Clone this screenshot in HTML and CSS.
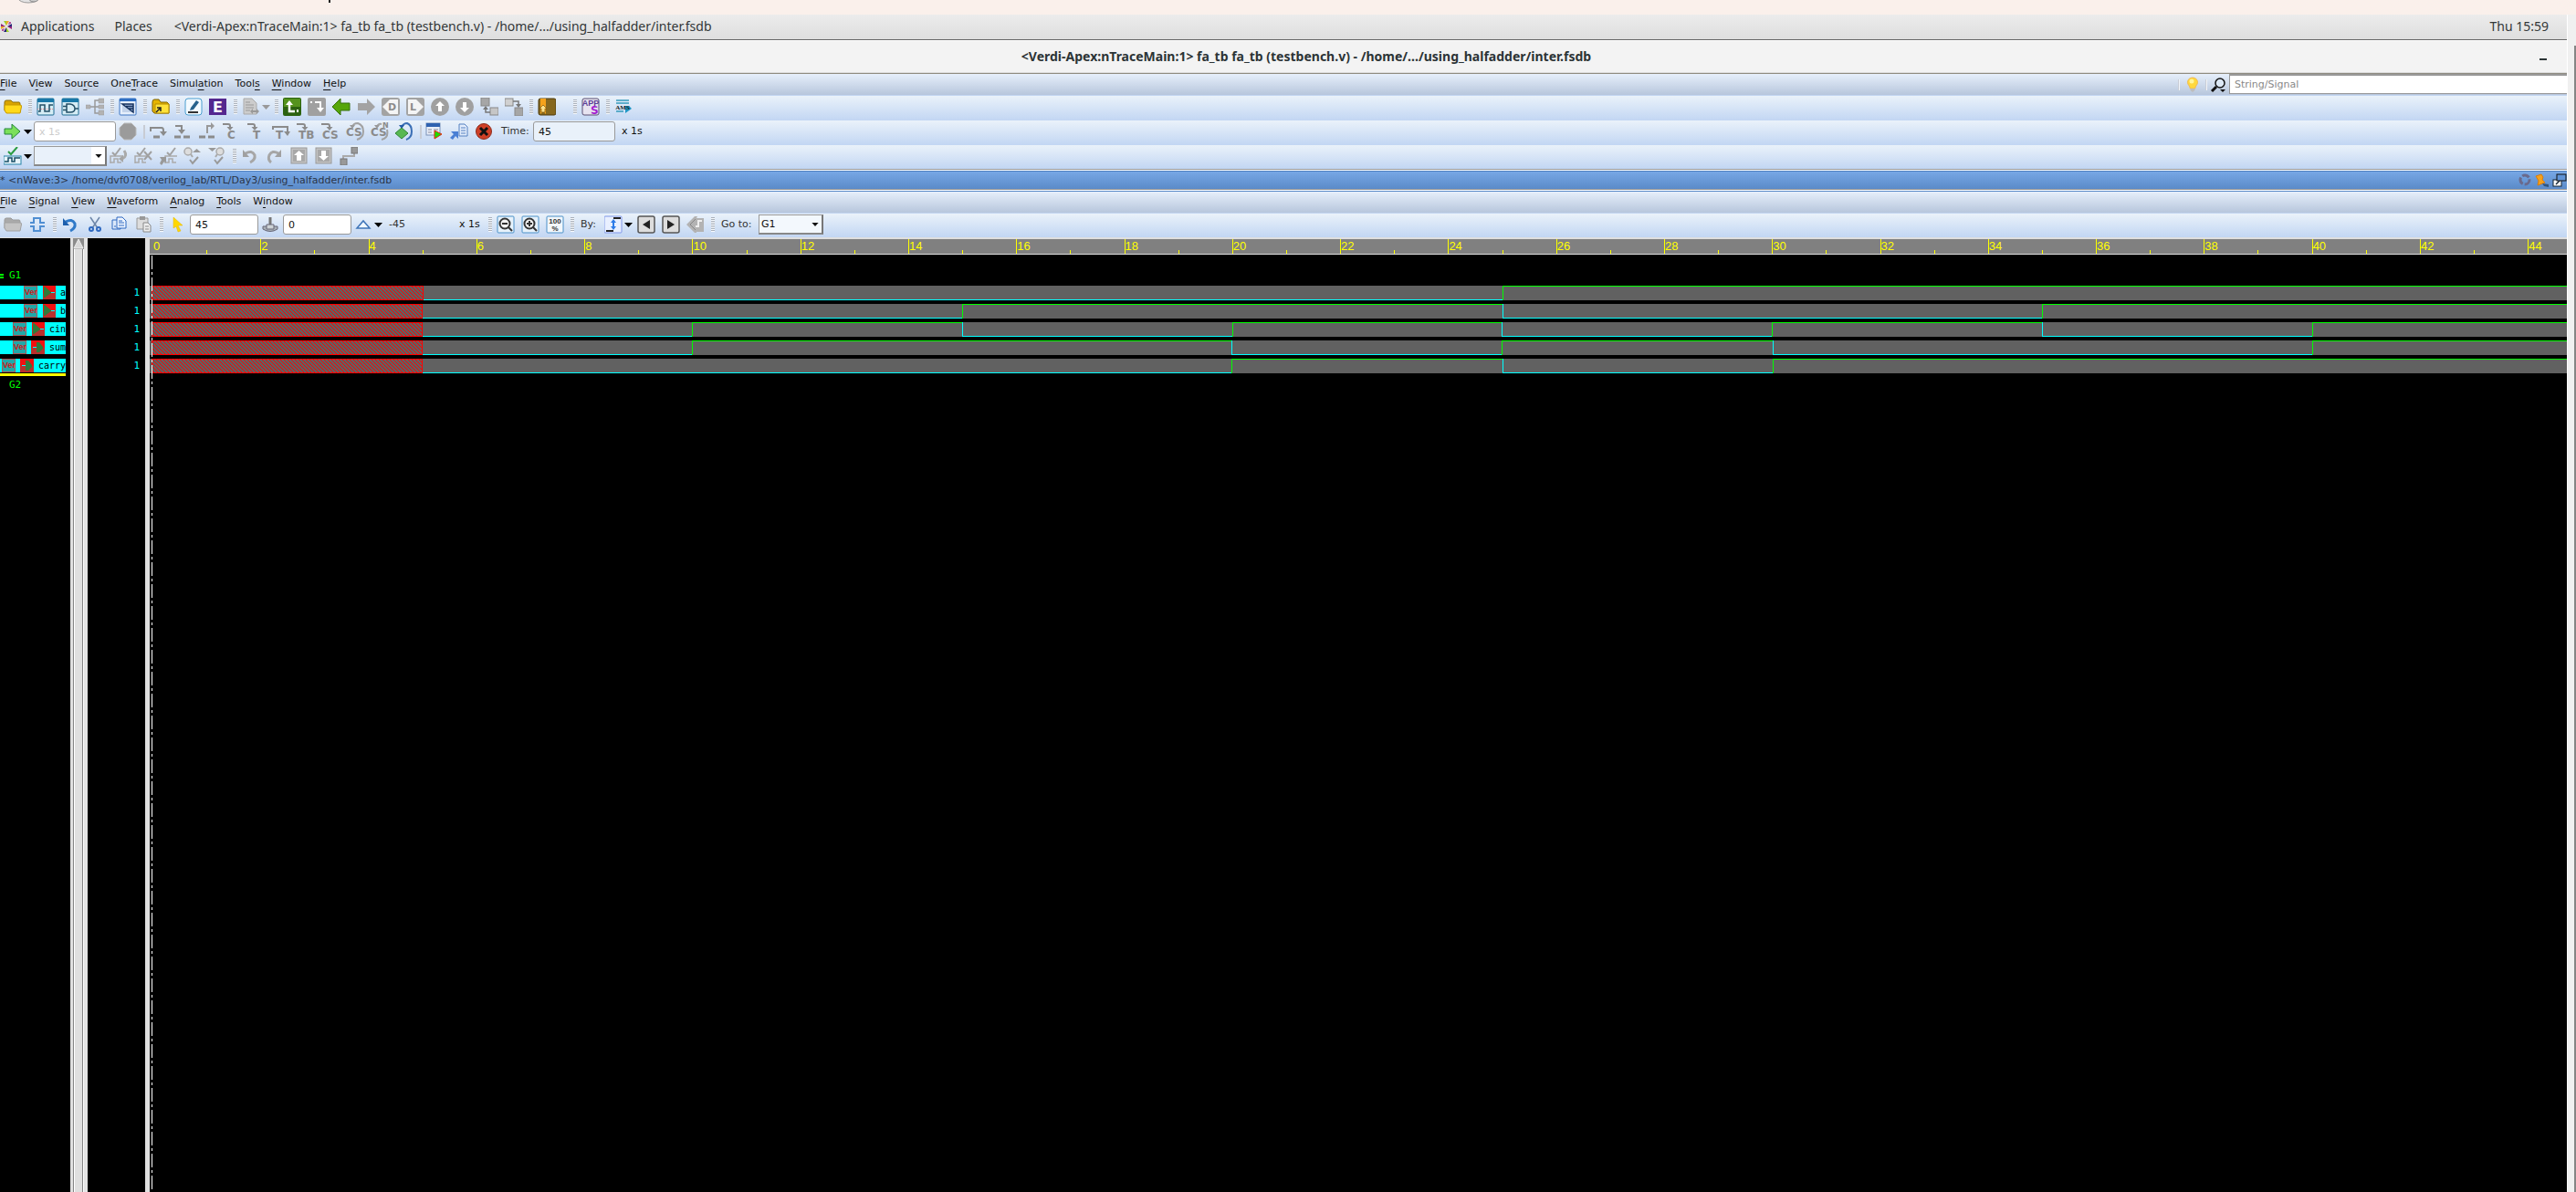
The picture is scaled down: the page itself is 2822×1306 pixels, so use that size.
FILE: index.html
```html
<!DOCTYPE html>
<html lang="en">
<head>
<meta charset="utf-8">
<title>Verdi nWave</title>
<link rel="stylesheet" href="styles.css">
</head>
<body>
<svg class="defs" width="0" height="0" aria-hidden="true">
  <symbol id="caret" viewBox="0 0 9 5"><path d="M0 0H9L4.500 5Z" fill="currentColor"/></symbol>
  <symbol id="step" viewBox="0 0 20 20"><path d="M3 3H10Q12 3 12 5V7" fill="none" stroke="#8b8b8b" stroke-width="2"/><path d="M8.500 6H15.500L12 10Z" fill="#8b8b8b"/></symbol>
  <symbol id="check-wave" viewBox="0 0 20 20"><path d="M1 18V10H15" fill="none" stroke="#aaa" stroke-width="1.500"/><path d="M1 17H5V13H9V17H13" fill="none" stroke="#aaa" stroke-width="1.500"/><path d="M3 6L6 9L12 1" fill="none" stroke="#a2a2a2" stroke-width="2"/></symbol>
  <symbol id="port-in" viewBox="0 0 15 15"><rect x="1" y="0" width="14" height="15" fill="#b8302c"/><rect x="1" y="0" width="14" height="8" fill="#f01010"/><path d="M2 1H3L10 7V8L3 13H2Z" fill="#2f7a3a"/><path d="M10 7.500H14" stroke="#0ff"/></symbol>
  <symbol id="port-out" viewBox="0 0 15 15"><rect x="0" y="0" width="15" height="15" fill="#b8302c"/><rect x="0" y="0" width="15" height="8" fill="#f01010"/><path d="M6 2H9L13 7V9L9 13H6Z" fill="#2f7a3a"/><path d="M2 7.500H6" stroke="#0ff"/></symbol>
</svg>

<div class="remote-edge">
  <svg width="40" height="4" viewBox="0 0 40 4"><ellipse cx="23" cy="-2" rx="11" ry="5" fill="#e3e3e3" stroke="#999"/><ellipse cx="29" cy="-3" rx="6" ry="5" fill="#ccc" stroke="#888"/></svg>
  <i class="tail"></i>
</div>
<div class="screen">
<div class="desktop">
  <header class="panel">
    <svg class="logo" viewBox="0 0 14 14"><path d="M4 1H7V6Z" fill="#9ccd2a"/><path d="M7 1H10L7 6Z" fill="#efa724"/><path d="M13 4V7L8 7Z" fill="#262577"/><path d="M13 7V10L8 7Z" fill="#932279"/><path d="M10 13H7V8Z" fill="#9ccd2a"/><path d="M7 13H4L7 8Z" fill="#262577"/><path d="M1 4V7H6Z" fill="#932279"/><path d="M1 7V10L6 7Z" fill="#efa724"/><path d="M10 2H12V4L9 5ZM2 10L5 9L4 12H2Z" fill="#b2549b"/></svg>
    <span class="panel-apps">Applications</span>
    <span class="panel-places">Places</span>
    <span>&lt;Verdi-Apex:nTraceMain:1&gt; fa_tb fa_tb (testbench.v) - /home/.../using_halfadder/inter.fsdb</span>
    <time>Thu 15:59</time>
  </header>
  <div class="titlebar">
    <h1>&lt;Verdi-Apex:nTraceMain:1&gt; fa_tb fa_tb (testbench.v) - /home/.../using_halfadder/inter.fsdb</h1>
    <button class="minimize" aria-label="Minimize"></button>
  </div>

  <nav class="menubar">
    <button><u>F</u>ile</button><button>V<u>i</u>ew</button><button>Sou<u>r</u>ce</button><button>One<u>T</u>race</button><button>Simul<u>a</u>tion</button><button>Tool<u>s</u></button><button><u>W</u>indow</button><button><u>H</u>elp</button>
    <div class="find">
      <i class="rule"></i>
      <svg width="24" height="18" viewBox="0 0 24 18"><path d="M12 1C8.500 1 6.500 3.500 6.500 6.200C6.500 9 9 10 9.300 13H14.700C15 10 17.500 9 17.500 6.200C17.500 3.500 15.500 1 12 1Z" fill="#ffd83d" stroke="#f0bb55"/><circle cx="11" cy="5" r="2.500" fill="#fff59a"/><path d="M9.500 13H14.500V15L12 17L9.500 15Z" fill="#bdbdbd"/></svg>
      <i class="rule"></i>
      <svg width="20" height="18" viewBox="0 0 20 18"><circle cx="12" cy="7" r="5" fill="#dce8f5" stroke="#111" stroke-width="1.500"/><path d="M8 11L3 16" stroke="#111" stroke-width="3"/><path d="M12 14H18L15 17Z" fill="#111"/></svg>
      <input type="text" class="search" placeholder="String/Signal" aria-label="String/Signal">
    </div>
  </nav>

  <div class="toolbar">
    <button class="tb" aria-label="Open"><svg viewBox="0 0 20 20"><path d="M1 5Q1 3 3 3H8L10 5H17Q18 5 18 7V16H3L1 14Z" fill="#d9a400" stroke="#8e6e00"/><path d="M1 8H18Q20 8 19.500 10L18 17H3L1 14Z" fill="#ffd91a" stroke="#c79a00"/></svg></button>
    <i class="grip"></i>
    <button class="tb" aria-label="New waveform"><svg viewBox="0 0 20 20"><rect x="1" y="1" width="18" height="18" rx="1" fill="#d6edf5" stroke="#1c6a91"/><path d="M1 1H19V5H1Z" fill="#1878a8"/><path d="M1 12.500H19" stroke="#e88" stroke-dasharray="1 1"/><path d="M2 15H4V8H9V15H14V8H18" fill="none" stroke="#244f66" stroke-width="1.500"/></svg></button>
    <button class="tb" aria-label="New schematic"><svg viewBox="0 0 20 20"><rect x="1" y="1" width="18" height="18" rx="1" fill="#d6edf5" stroke="#1c6a91"/><path d="M1 1H19V5H1Z" fill="#1878a8"/><path d="M6 7H10Q15 8 15 12Q15 16 10 16H6ZM2 9.500H6M2 13.500H6M15 12H19" fill="none" stroke="#244f66" stroke-width="1.500"/></svg></button>
    <button class="tb" aria-label="Hierarchy"><svg viewBox="0 0 20 20"><path d="M5 10H14M14 3H10V17H14" fill="none" stroke="#999" stroke-width="1.500"/><path d="M0 8H5V12H0ZM14 1H20V6H14ZM14 8H20V12H14ZM14 14H20V19H14Z" fill="#b3b3b3" stroke="#999" stroke-width=".5"/></svg></button>
    <i class="grip"></i>
    <button class="tb" aria-label="Window"><svg viewBox="0 0 20 20"><rect x="1" y="1" width="18" height="18" rx="1" fill="#e6effc" stroke="#3d74c1"/><path d="M1 1H19V4H1Z" fill="#2f6fc4"/><path d="M4 7V16H16V7Z" fill="#c3d3ea"/><path d="M4 7H16V16Z" fill="#9fb6d8"/><path d="M4 7L16 16V7ZM8 9.500H16M11 12H16" fill="none" stroke="#17335f" stroke-width="1.500"/></svg></button>
    <i class="grip"></i>
    <button class="tb" aria-label="Restore session"><svg viewBox="0 0 20 20"><path d="M1 5Q1 2 3 2H8L10 5H17L19 7V17H3L1 15Z" fill="#e5b400" stroke="#7c6100"/><path d="M4 7H19V17H4Z" fill="#ffe23a" stroke="#b38b00"/><path d="M5 16L9 12M6 11H10V15" stroke="#222" stroke-width="1.500" fill="none"/></svg></button>
    <i class="grip"></i>
    <button class="tb" aria-label="Edit"><svg viewBox="0 0 20 20"><rect x="1" y="1" width="18" height="18" rx="3" fill="#f3faff" stroke="#4a9ed0"/><path d="M7 11L13 3L16 5L10 13L6 14Z" fill="#27628c"/><path d="M4 16H15" stroke="#333" stroke-width="2"/></svg></button>
    <button class="tb" aria-label="E"><svg viewBox="0 0 20 20"><rect x="0" y="1" width="19" height="18" fill="#54278f"/><text x="9.500" y="16" class="glyph light mid" font-size="16">E</text></svg></button>
    <i class="grip"></i>
    <button class="tb" aria-label="Report"><svg viewBox="0 0 20 20"><path d="M2 1H11L16 6V18H2Z" fill="#ccc" stroke="#aaa"/><path d="M4 5H9M4 8H13M4 11H13M4 14H9" stroke="#999"/><path d="M9 15L12 12V14H16V12L19 15L16 18V16H12V18Z" fill="#999"/></svg></button><button class="drop pale" aria-label="Report options"><svg><use href="#caret"/></svg></button>
    <i class="grip"></i>
    <button class="tb" aria-label="Load up"><svg viewBox="0 0 20 20"><rect x="0" y="0" width="20" height="20" rx="2" fill="#2c6210"/><rect x="1" y="1" width="18" height="9" fill="#55931d"/><path d="M7 8V15H13" fill="none" stroke="#fff" stroke-width="2.500"/><path d="M3 8L7 3L11 8Z" fill="#fff"/><rect x="15" y="13" width="2" height="3" fill="#fff"/></svg></button>
    <button class="tb" aria-label="Load down"><svg viewBox="0 0 20 20"><rect x="0" y="0" width="20" height="20" rx="2" fill="#a0a0a0"/><path d="M8 5H14V12" fill="none" stroke="#fff" stroke-width="2"/><path d="M10 11H18L14 16Z" fill="#fff"/><rect x="3" y="4" width="2" height="2" fill="#fff"/></svg></button>
    <button class="tb" aria-label="Back"><svg viewBox="0 0 20 20"><path d="M0 10L9 1V6H19V14H9V19Z" fill="#56a60a" stroke="#37700a"/></svg></button>
    <button class="tb" aria-label="Forward"><svg viewBox="0 0 20 20"><path d="M20 10L11 1V6H1V14H11V19Z" fill="#a3a3a3"/></svg></button>
    <button class="tb" aria-label="Driver"><svg viewBox="0 0 20 20"><rect width="20" height="20" rx="3" fill="#a3a3a3"/><path d="M1 10L9 2H18V18H9Z" fill="#f4f4f4"/><text x="7" y="14" class="glyph" font-size="11">D</text></svg></button>
    <button class="tb" aria-label="Load"><svg viewBox="0 0 20 20"><rect width="20" height="20" rx="3" fill="#a3a3a3"/><path d="M19 10L11 2H2V18H11Z" fill="#f4f4f4"/><text x="4" y="14" class="glyph" font-size="11">L</text></svg></button>
    <button class="tb" aria-label="Previous"><svg viewBox="0 0 20 20"><circle cx="10" cy="10" r="10" fill="#a0a0a0"/><path d="M10 4L15 9H12V15H8V9H5Z" fill="#fff"/></svg></button>
    <button class="tb" aria-label="Next"><svg viewBox="0 0 20 20"><circle cx="10" cy="10" r="10" fill="#a0a0a0"/><path d="M10 16L15 11H12V5H8V11H5Z" fill="#fff"/></svg></button>
    <button class="tb" aria-label="Trace up"><svg viewBox="0 0 20 20"><rect x="1" y="0" width="9" height="9" fill="#a6a6a6" stroke="#888"/><rect x="11" y="11" width="9" height="8" fill="#c6c6c6" stroke="#888"/><path d="M11 16H6V12" fill="none" stroke="#777" stroke-width="1.500"/><path d="M3 13L6 9L9 13Z" fill="#777"/></svg></button>
    <button class="tb" aria-label="Trace down"><svg viewBox="0 0 20 20"><rect x="0" y="1" width="9" height="8" fill="#d0d0d0" stroke="#888"/><rect x="11" y="11" width="9" height="9" fill="#a6a6a6" stroke="#888"/><path d="M9 4H15V8" fill="none" stroke="#777" stroke-width="1.500"/><path d="M12 7H18L15 11Z" fill="#777"/></svg></button>
    <i class="grip"></i>
    <button class="tb" aria-label="Bookmark"><svg viewBox="0 0 20 20"><rect x="1" y="1" width="19" height="18" rx="2" fill="#86681f" stroke="#4e3b0c"/><path d="M3 1H9V18L6 15L3 18Z" fill="#f5a21b"/><path d="M6 8L10 12H8V16H4V12H2Z" fill="#ffe28c" stroke="#805000" stroke-width=".7"/></svg></button>
    <i class="space"></i><i class="grip"></i>
    <button class="tb" aria-label="Apps"><svg viewBox="0 0 20 20"><rect x="1" y="1" width="18" height="18" rx="2" fill="#e7e3f0" stroke="#5a4f72"/><text x="10" y="9" class="glyph apps mid" font-size="9">APP</text><text x="10" y="18" class="glyph apps-s" font-size="12">S</text></svg></button>
    <i class="grip"></i>
    <button class="tb" aria-label="AMS"><svg viewBox="0 0 20 20"><path d="M2 3H16M2 6H16M2 15H10" stroke="#39b" stroke-width="1.500"/><path d="M12 9H16L19 12L12 17Z" fill="#1f96c4"/><text x="9" y="13" class="glyph ams mid" font-size="7">AMS</text></svg></button>
  </div>

  <div class="toolbar">
    <button class="tb" aria-label="Run"><svg viewBox="0 0 20 20"><path d="M1 7H9V2L18 10L9 18V13H1Z" fill="#7be05a" stroke="#24853a"/></svg></button><button class="drop" aria-label="Run options"><svg><use href="#caret"/></svg></button>
    <input type="text" class="field wide disabled" value="x 1s" aria-label="Run time" disabled>
    <button class="tb" aria-label="Stop"><svg viewBox="0 0 20 20"><path d="M6 1H14L19 6V14L14 19H6L1 14V6Z" fill="#9b9b9b" stroke="#bbb"/></svg></button>
    <i class="bar"></i>
    <button class="tb" aria-label="Step over"><svg viewBox="0 0 20 20"><path d="M2 10V6H14Q16 6 16 9V11" fill="none" stroke="#8b8b8b" stroke-width="2"/><path d="M12 10H20L16 15Z" fill="#8b8b8b"/><path d="M5 16H12" stroke="#8b8b8b" stroke-width="3"/></svg></button>
    <button class="tb" aria-label="Step in"><svg viewBox="0 0 20 20"><path d="M2 4H9V9" fill="none" stroke="#8b8b8b" stroke-width="2"/><path d="M5 8H13L9 13Z" fill="#8b8b8b"/><path d="M1 16H8M11 16H18" stroke="#8b8b8b" stroke-width="3"/></svg></button>
    <button class="tb" aria-label="Step out"><svg viewBox="0 0 20 20"><path d="M10 12V4H14" fill="none" stroke="#999" stroke-width="2"/><path d="M14 0L18 4L14 8Z" fill="#999"/><path d="M1 16H8M11 16H18" stroke="#8b8b8b" stroke-width="3"/></svg></button>
    <button class="tb" aria-label="Step C"><svg viewBox="0 0 20 20"><use href="#step" width="20" height="20" x="-4" y="-1"/><text x="5" y="18" class="glyph" font-size="12">C</text></svg></button>
    <button class="tb" aria-label="Step T"><svg viewBox="0 0 20 20"><use href="#step" width="20" height="20" x="-4" y="-1"/><text x="6" y="18" class="glyph" font-size="12">T</text></svg></button>
    <button class="tb" aria-label="Next T"><svg viewBox="0 0 20 20"><path d="M1 8V5H17V11" fill="none" stroke="#8b8b8b" stroke-width="2"/><path d="M13 10H20L17 15Z" fill="#8b8b8b"/><text x="4" y="18" class="glyph" font-size="12">T</text></svg></button>
    <button class="tb" aria-label="Step TB"><svg viewBox="0 0 20 20"><use href="#step" width="20" height="20" x="-3" y="-1"/><text x="2" y="18" class="glyph" font-size="12">TB</text></svg></button>
    <button class="tb" aria-label="Step CS"><svg viewBox="0 0 20 20"><use href="#step" width="20" height="20" x="-3" y="-1"/><text x="1" y="18" class="glyph" font-size="12">CS</text></svg></button>
    <button class="tb" aria-label="Loop CS"><svg viewBox="0 0 20 20"><path d="M7 5Q8 1 13 1Q19 3 19 10Q19 17 12 19" fill="none" stroke="#a2a2a2" stroke-width="2"/><path d="M4 3H10L7 7Z" fill="#999"/><text x="0" y="15" class="glyph" font-size="12">CS</text></svg></button>
    <button class="tb" aria-label="Loop next CS"><svg viewBox="0 0 20 20"><path d="M7 5Q8 1 12 2M18 8Q20 17 12 19" fill="none" stroke="#a2a2a2" stroke-width="2"/><path d="M4 3H10L7 7Z" fill="#999"/><text x="0" y="15" class="glyph" font-size="12">CS</text><text x="13" y="6" class="glyph" font-size="8">N</text></svg></button>
    <button class="tb" aria-label="Restart"><svg viewBox="0 0 20 20"><path d="M7 5Q9 1 13 1Q18 3 18 10Q18 17 12 19" fill="none" stroke="#3b6fb5" stroke-width="2"/><path d="M4 3H10L7 7Z" fill="#245aa5"/><path d="M7 6L14 12L7 18L0 12Z" fill="#58b852" stroke="#2f8437"/></svg></button>
    <i class="bar"></i>
    <button class="tb" aria-label="Breakpoint"><svg viewBox="0 0 20 20"><rect x="1" y="1" width="15" height="13" fill="#e8eef8" stroke="#7b91b8"/><path d="M1 1H16V5H1Z" fill="#2f62b0"/><path d="M3 8H7M3 11H7M9 8H14" stroke="#889"/><path d="M10 9L18 13L10 18Z" fill="#1ae000" stroke="#f02010"/></svg></button>
    <button class="tb" aria-label="Source"><svg viewBox="0 0 20 20"><path d="M10 2H16L19 5V15H10Z" fill="#e2ecfb" stroke="#5580c0"/><path d="M12 6H17M12 9H17M12 12H17" stroke="#5580c0"/><path d="M0 17L4 13L1 10H9V18L6 15L3 19Z" fill="#4a7fd4"/></svg></button>
    <button class="tb" aria-label="Kill"><svg viewBox="0 0 20 20"><circle cx="10" cy="10" r="8.500" fill="#cf4027" stroke="#8d2c1c"/><path d="M6 6L14 14M14 6L6 14" stroke="#111" stroke-width="3"/></svg></button>
    <label class="caption" for="sim-time">Time:</label>
    <input type="text" id="sim-time" class="field wide readonly" value="45">
    <span class="unit">x 1s</span>
  </div>

  <div class="toolbar last">
    <button class="tb" aria-label="Check waveform"><svg viewBox="0 0 20 20"><rect x="0" y="10" width="19" height="9" fill="#e7f4fa" stroke="#2684a8"/><path d="M1 16H5V12H9V16H12V12H18" fill="none" stroke="#184d66" stroke-width="1.500"/><path d="M5 5L8 8L15 0" fill="none" stroke="#2a9c43" stroke-width="2"/></svg></button><button class="drop" aria-label="Check options"><svg><use href="#caret"/></svg></button>
    <div class="combo check"><select aria-label="Assertion"><option></option></select><svg><use href="#caret"/></svg></div>
    <button class="tb" aria-label="Replay check"><svg viewBox="0 0 20 20"><use href="#check-wave" width="20" height="20"/><path d="M16 4Q20 10 14 13" fill="none" stroke="#aaa" stroke-width="3"/><path d="M10 13L15 9V17Z" fill="#a5a5a5"/></svg></button>
    <button class="tb" aria-label="Clear check"><svg viewBox="0 0 20 20"><use href="#check-wave" width="20" height="20"/><path d="M11 5L19 14M19 5L11 14" stroke="#a0a0a0" stroke-width="2"/></svg></button>
    <button class="tb" aria-label="Trace check"><svg viewBox="0 0 20 20"><use href="#check-wave" width="20" height="20" x="6"/><path d="M1 18L3 14L1 11H8V17L6 16L3 20Z" fill="#999"/></svg></button>
    <button class="tb" aria-label="Find previous"><svg viewBox="0 0 20 20"><circle cx="5" cy="5" r="4" fill="#ddd" stroke="#aaa" stroke-width="1.500"/><path d="M8 8L10 11" stroke="#aaa" stroke-width="2"/><path d="M10 6H19L14.500 2Z" fill="#999"/><path d="M7 14L10 18L16 11" fill="none" stroke="#999" stroke-width="2"/></svg></button>
    <button class="tb" aria-label="Find next"><svg viewBox="0 0 20 20"><circle cx="13" cy="5" r="4" fill="#ddd" stroke="#aaa" stroke-width="1.500"/><path d="M10 8L8 11" stroke="#aaa" stroke-width="2"/><path d="M0 1H9L4.500 5Z" fill="#999"/><path d="M7 14L10 18L16 11" fill="none" stroke="#999" stroke-width="2"/></svg></button>
    <i class="grip"></i>
    <button class="tb" aria-label="Undo"><svg viewBox="0 0 20 20"><path d="M5 7Q12 3 15 9Q16 14 10 17" fill="none" stroke="#a6a6a6" stroke-width="3"/><path d="M2 3V11H9Z" fill="#a0a0a0"/></svg></button>
    <button class="tb" aria-label="Redo"><svg viewBox="0 0 20 20"><path d="M14 7Q7 3 4 9Q2 14 6 17" fill="none" stroke="#a6a6a6" stroke-width="3"/><path d="M17 3V11H10Z" fill="#a0a0a0"/></svg></button>
    <button class="tb" aria-label="Up"><svg viewBox="0 0 20 20"><rect x="1" y="1" width="17" height="17" fill="#c2c2c2" stroke="#999"/><rect x="3" y="3" width="13" height="13" fill="#a8a8a8"/><path d="M9.500 4L15 9H12V15H7V9H4Z" fill="#fff"/></svg></button>
    <button class="tb" aria-label="Down"><svg viewBox="0 0 20 20"><rect x="1" y="1" width="17" height="17" fill="#c2c2c2" stroke="#999"/><rect x="3" y="3" width="13" height="13" fill="#a8a8a8"/><path d="M9.500 15L15 10H12V4H7V10H4Z" fill="#fff"/></svg></button>
    <button class="tb" aria-label="Connect"><svg viewBox="0 0 20 20"><path d="M4 15V10H16V5" fill="none" stroke="#aaa" stroke-width="2"/><rect x="13" y="0" width="7" height="7" fill="#999" stroke="#777"/><rect x="1" y="13" width="7" height="7" fill="#999" stroke="#777"/></svg></button>
  </div>

  <div class="docktitle">
    <h2>* &lt;nWave:3&gt; /home/dvf0708/verilog_lab/RTL/Day3/using_halfadder/inter.fsdb</h2>
    <svg width="54" height="18" viewBox="0 0 54 18"><circle cx="8" cy="8" r="5" fill="none" stroke="#6a6a8c" stroke-width="3" stroke-dasharray="8 2"/><path d="M20 4L26 2L28 5L27 8L30 11L22 14L23 9Z" fill="#f5a11c" stroke="#d97c0a"/><path d="M27 12L34 13V16L29 15Z" fill="#33567c"/><rect x="39" y="8" width="9" height="7" fill="#fff" stroke="#123"/><path d="M42 13L46 9" stroke="#123" stroke-width="1.500"/><rect x="43" y="2" width="10" height="7" fill="#5f93d6" stroke="#111"/></svg>
  </div>

  <nav class="menubar second">
    <button><u>F</u>ile</button><button><u>S</u>ignal</button><button><u>V</u>iew</button><button><u>W</u>aveform</button><button><u>A</u>nalog</button><button><u>T</u>ools</button><button>W<u>i</u>ndow</button>
  </nav>

  <div class="toolbar last">
    <button class="tb" aria-label="Open file"><svg viewBox="0 0 20 20"><path d="M1 5Q1 3 3 3H8L10 5H17Q18 5 18 7V16H3L1 14Z" fill="#aaa" stroke="#999"/><path d="M1 8H18Q20 8 19.500 10L18 17H3L1 14Z" fill="#c4c4c4" stroke="#a2a2a2"/></svg></button>
    <button class="tb" aria-label="Get signals"><svg viewBox="0 0 20 20"><path d="M2 8H6V3H13V8H18M2 12H6V17H13V12H18" fill="none" stroke="#4f8ed2" stroke-width="2"/></svg></button>
    <i class="grip"></i>
    <button class="tb" aria-label="Undo"><svg viewBox="0 0 20 20"><path d="M5 7Q12 3 15 9Q16 14 10 17" fill="none" stroke="#2f79c8" stroke-width="3"/><path d="M2 3V11H9Z" fill="#1d5fae"/></svg></button>
    <button class="tb" aria-label="Cut"><svg viewBox="0 0 20 20"><path d="M5 2L13 14M15 2L7 14" stroke="#6d86a8" stroke-width="1.500"/><circle cx="6" cy="15" r="2" fill="none" stroke="#2f69c0" stroke-width="2"/><circle cx="14" cy="15" r="2" fill="none" stroke="#2f69c0" stroke-width="2"/></svg></button>
    <button class="tb" aria-label="Copy"><svg viewBox="0 0 20 20"><path d="M2 5H11V15H2Z" fill="#dbe8fa" stroke="#2f69c0"/><path d="M7 2H13L17 6V14H7Z" fill="#eef5ff" stroke="#2f69c0"/><path d="M9 6H13M9 8H15M9 11H15M4 12H6" stroke="#2f69c0"/></svg></button>
    <button class="tb" aria-label="Paste"><svg viewBox="0 0 20 20"><path d="M2 3H14V15H2Z" fill="#ddd" stroke="#999"/><path d="M5 1H11V5H5Z" fill="#999"/><path d="M9 8H14L17 11V18H9Z" fill="#eee" stroke="#888"/><path d="M11 12H15M11 15H15" stroke="#888"/></svg></button>
    <i class="grip"></i>
    <button class="tb" aria-label="Select"><svg viewBox="0 0 20 20"><path d="M6 2L16 11H11L14 17L11 18L9 12L6 14Z" fill="#ffd800" stroke="#e5b500" stroke-width=".5"/></svg></button>
    <input type="text" class="field" value="45" aria-label="Cursor time">
    <button class="tb" aria-label="Marker"><svg viewBox="0 0 20 20"><path d="M10 2V11" stroke="#777" stroke-width="3"/><path d="M2 12H18V15Q10 20 2 15Z" fill="#aab2b8" stroke="#667"/><path d="M6 10H14V15H6Z" fill="#cdd3d6" stroke="#667"/></svg></button>
    <input type="text" class="field" value="0" aria-label="Marker time">
    <button class="tb" aria-label="Delta"><svg viewBox="0 0 20 20"><path d="M3 14L10 6L17 14Z" fill="#f0f8ff" stroke="#3e74b8" stroke-width="1.500"/></svg></button><button class="drop" aria-label="Delta options"><svg><use href="#caret"/></svg></button>
    <output class="delta">-45</output>
    <span class="unit">x 1s</span>
    <i class="grip"></i>
    <button class="tb" aria-label="Zoom out"><svg viewBox="0 0 20 20"><rect x="1" y="1" width="18" height="18" rx="1" fill="#e7f2fb" stroke="#4a90c8"/><circle cx="9" cy="9" r="5.500" fill="#f4f4f4" stroke="#333" stroke-width="2"/><path d="M6 9H12M13 13L17 17" stroke="#333" stroke-width="2"/></svg></button>
    <button class="tb" aria-label="Zoom in"><svg viewBox="0 0 20 20"><rect x="1" y="1" width="18" height="18" rx="1" fill="#e7f2fb" stroke="#4a90c8"/><circle cx="9" cy="9" r="5.500" fill="#f4f4f4" stroke="#333" stroke-width="2"/><path d="M6 9H12M9 6V12M13 13L17 17" stroke="#333" stroke-width="2"/></svg></button>
    <button class="tb" aria-label="Zoom 100%"><svg viewBox="0 0 20 20"><rect x="1" y="1" width="18" height="18" rx="1" fill="#f2f7fb" stroke="#4a90c8"/><text x="10" y="9" class="glyph dark mid" font-size="8">100</text><text x="10" y="17" class="glyph dark mid" font-size="8">%</text></svg></button>
    <i class="grip"></i>
    <span class="caption by">By:</span>
    <button class="tb" aria-label="Any edge"><svg viewBox="0 0 20 20"><rect x="0" y="1" width="19" height="18" rx="1" fill="#e9f0ff" stroke="#7f96e8"/><path d="M2 17H10M10 3H18" stroke="#222" stroke-width="2"/><path d="M10 6V14" stroke="#2d7be8" stroke-width="2"/><path d="M7 8L10 4L13 8ZM7 12L10 16L13 12Z" fill="#2d7be8"/></svg></button><button class="drop" aria-label="Edge options"><svg><use href="#caret"/></svg></button>
    <button class="tb" aria-label="Search backward"><svg viewBox="0 0 20 20"><rect x="1" y="1" width="18" height="18" rx="2" fill="#ddd" stroke="#555" stroke-width="1.500"/><path d="M6 10L14 5V15Z" fill="#222"/></svg></button>
    <button class="tb" aria-label="Search forward"><svg viewBox="0 0 20 20"><rect x="1" y="1" width="18" height="18" rx="2" fill="#ddd" stroke="#555" stroke-width="1.500"/><path d="M14 10L6 5V15Z" fill="#222"/></svg></button>
    <button class="tb" aria-label="Active driver"><svg viewBox="0 0 20 20"><path d="M0 10L9 1H12L11 3H19V18H11V19H9Z" fill="#b3b3b3"/><path d="M4 10L10 4M4 10L10 16" stroke="#888"/><path d="M17 6H13V12H10" fill="none" stroke="#eee" stroke-width="2"/></svg></button>
    <i class="grip"></i>
    <label class="caption goto" for="goto">Go to:</label>
    <div class="combo group"><select id="goto"><option>G1</option><option>G2</option></select><svg><use href="#caret"/></svg></div>
  </div>

  <main class="wave">
    <section class="names">
      <p class="grouprow"><i class="mark"></i>G1</p>
      <ul>
        <li><b>Ver</b><svg><use href="#port-in"/></svg><span>a</span></li>
        <li><b>Ver</b><svg><use href="#port-in"/></svg><span>b</span></li>
        <li><b>Ver</b><svg><use href="#port-in"/></svg><span>cin</span></li>
        <li><b>Ver</b><svg><use href="#port-out"/></svg><span>sum</span></li>
        <li><b>Ver</b><svg><use href="#port-out"/></svg><span>carry</span></li>
      </ul>
      <p class="grouprow next">G2</p>
    </section>
    <div class="scroller">
      <svg width="12" height="12" viewBox="0 0 12 12"><rect width="12" height="12" fill="#8c8c8c"/><path d="M6 1L11 11H1Z" fill="#d8d8d8" stroke="#eee"/></svg>
    </div>
    <ol class="values"><li>1</li><li>1</li><li>1</li><li>1</li><li>1</li></ol>
    <section class="plot">
      <div class="ruler">
        <span>0</span><span>2</span><span>4</span><span>6</span><span>8</span><span>10</span><span>12</span><span>14</span><span>16</span><span>18</span><span>20</span><span>22</span><span>24</span><span>26</span><span>28</span><span>30</span><span>32</span><span>34</span><span>36</span><span>38</span><span>40</span><span>42</span><span class="cut" style="flex-grow:.715">44</span>
      </div>
      <div class="traces">
        <div class="trace"><i class="x" style="flex-grow:5"></i><i class="lo" style="flex-grow:20"></i><i class="hi" style="flex-grow:19.715"></i></div>
        <div class="trace"><i class="x" style="flex-grow:5"></i><i class="lo" style="flex-grow:10"></i><i class="hi" style="flex-grow:10"></i><i class="lo" style="flex-grow:10"></i><i class="hi" style="flex-grow:9.715"></i></div>
        <div class="trace"><i class="x" style="flex-grow:5"></i><i class="lo" style="flex-grow:5"></i><i class="hi" style="flex-grow:5"></i><i class="lo" style="flex-grow:5"></i><i class="hi" style="flex-grow:5"></i><i class="lo" style="flex-grow:5"></i><i class="hi" style="flex-grow:5"></i><i class="lo" style="flex-grow:5"></i><i class="hi" style="flex-grow:4.715"></i></div>
        <div class="trace"><i class="x" style="flex-grow:5"></i><i class="lo" style="flex-grow:5"></i><i class="hi" style="flex-grow:10"></i><i class="lo" style="flex-grow:5"></i><i class="hi" style="flex-grow:5"></i><i class="lo" style="flex-grow:10"></i><i class="hi" style="flex-grow:4.715"></i></div>
        <div class="trace"><i class="x" style="flex-grow:5"></i><i class="lo" style="flex-grow:15"></i><i class="hi" style="flex-grow:5"></i><i class="lo" style="flex-grow:5"></i><i class="hi" style="flex-grow:14.715"></i></div>
        <i class="cursor"></i>
      </div>
    </section>
  </main>
</div>
<div class="outer-scroll"></div>
</div>
</body>
</html>
```
FILE: styles.css
```css
* { box-sizing: border-box; }
body {
  margin: 0;
  min-height: 100vh;
  display: flex;
  flex-direction: column;
  font: 11px/14px "DejaVu Sans", sans-serif;
  color: #111;
  background: #faf0eb;
  overflow-x: hidden;
}
h1, h2, p, ul, ol { margin: 0; padding: 0; list-style: none; font-size: inherit; font-weight: normal; }
button { margin: 0; padding: 0; border: 0; background: none; font: inherit; color: inherit; }
input, select { font: inherit; color: inherit; margin: 0; }
i { display: block; }
svg { display: block; flex: none; }
.defs { position: absolute; }

.remote-edge { height: 16px; display: flex; flex: none; padding-left: 8px; gap: 312px; }
.tail { width: 2px; height: 3px; background: #222; }

.screen { flex: 1; display: flex; }
.desktop { flex: 1; min-width: 0; display: flex; flex-direction: column; }
.outer-scroll { width: 10px; background: #f0f0f0; border-left: 1px solid #fff; display: flex; flex-direction: column; align-items: flex-end; }
.outer-scroll::after { content: ""; width: 2px; flex: 1; margin-top: 34px; background: #858585; }

.panel {
  height: 28px;
  display: flex;
  align-items: center;
  font: 14px/24px "Noto Sans", sans-serif;
  color: #333738;
  background: linear-gradient(#ececec, #dedede);
  border-bottom: 1px solid #666;
  padding-bottom: 2px;
  white-space: nowrap;
}
.logo { width: 14px; height: 14px; margin-right: 9px; }
.panel-apps { margin-right: 22px; }
.panel-places { margin-right: 24px; }
.panel time { margin-left: auto; margin-right: 20px; }

.titlebar {
  height: 37px;
  display: grid;
  grid-template-columns: 1fr auto 1fr;
  align-items: center;
  padding-bottom: 2px;
  background: #f3f3f3;
  border-top: 1px solid #fff;
  border-bottom: 1px solid #8f8b80;
  box-shadow: inset 0 -1px #dcdcdc;
}
.titlebar h1 { grid-column: 2; font: bold 14px/20px "Noto Sans", sans-serif; color: #2c3436; margin-left: 50px; white-space: nowrap; }
.minimize { justify-self: end; width: 8px; height: 2px; background: #2c3436; margin: 6px 22px 0 0; }

.menubar {
  height: 24px;
  display: flex;
  align-items: center;
  background: linear-gradient(#e6effb, #b7c6dc);
  border-bottom: 1px solid #c2d5f1;
}
.menubar > button { margin-right: 13px; padding-bottom: 2px; }
.menubar u { text-underline-offset: 3px; }
.find { margin-left: auto; display: flex; align-items: center; align-self: stretch; }
.rule { width: 2px; height: 12px; background: #c9cdd6; border-right: 1px solid #f2f4f8; margin: 0 2px; }
.search { width: 370px; height: 22px; align-self: flex-start; margin-left: 2px; border: 1px solid #999; border-top-width: 2px; border-right: 0; padding: 0 5px; background: #fff; border-radius: 0; }
.search::placeholder { color: #888; opacity: 1; }

.toolbar {
  height: 27px;
  display: flex;
  align-items: center;
  padding: 0 0 3px 1px;
  background: linear-gradient(#eaf2fa, #c2d6f3);
}
.toolbar.last { height: 26px; padding-bottom: 2px; }
.toolbar > * { flex: none; }
.tb { width: 27px; height: 24px; padding-left: 3px; display: flex; align-items: center; }
.tb svg { width: 20px; height: 20px; }
.glyph { font: bold 12px "DejaVu Sans", sans-serif; fill: #8b8b8b; }
.glyph[font-size="7"] { font-size: 7px; }
.glyph[font-size="8"] { font-size: 8px; }
.glyph[font-size="9"] { font-size: 9px; }
.glyph[font-size="11"] { font-size: 11px; }
.glyph[font-size="16"] { font-size: 16px; }
.glyph.mid { text-anchor: middle; }
.glyph.light { fill: #fff; }
.glyph.dark { fill: #333; font-family: "Liberation Sans", sans-serif; }
.glyph.apps { fill: #5b3f96; font-family: "Liberation Sans", sans-serif; }
.glyph.apps-s { fill: #a21fd0; }
.glyph.ams { fill: #122; font-family: "Liberation Serif", serif; }
.drop { width: 9px; color: #000; }
.drop svg { width: 9px; height: 5px; }
.tb + .drop svg { margin-left: -2px; }
.pale { color: #999; }
.grip { width: 9px; height: 16px; border: solid transparent; border-width: 0 2px 0 3px; background: repeating-linear-gradient(#a9b0ba 0 1px, #f7fafe 1px 2px) padding-box; }
.bar { width: 6px; height: 15px; border: solid transparent; border-width: 0 1px 0 3px; background: #c8ccd4 padding-box; }
.space { width: 12px; }
.field { width: 75px; height: 22px; padding: 0 5px; border: 1px solid #999; border-radius: 3px; background: #fff; }
.field.wide { width: 90px; }
.field.readonly { background: #e9f1fa; }
.field.disabled { color: #ccc; }
.caption { padding-left: 5px; width: 40px; color: #333; }
.caption.by { width: 28px; }
.caption.goto { width: 46px; }
.unit { width: 29px; }
.field + .unit { padding-left: 7px; width: 40px; }
.delta { width: 82px; padding-left: 5px; color: #333; }
.combo { height: 22px; position: relative; }
.combo.check { width: 80px; }
.combo.group { width: 71px; }
.combo select { appearance: none; width: 100%; height: 100%; border: 1px solid #999; border-radius: 0; padding: 0 2px; background: linear-gradient(#fff, #fff) right / 15px 100% no-repeat #e9f1fa; border-right: 2px solid #777; border-bottom: 2px solid #888; }
.combo.group select { background: #f3f8fd; }
.combo svg { position: absolute; right: 5px; top: 9px; width: 8px; height: 4px; pointer-events: none; }

.docktitle {
  height: 25px;
  display: flex;
  align-items: center;
  justify-content: space-between;
  color: #2a3446;
  background: linear-gradient(#7aaae8, #5888c6);
  border-top: 1px solid #999;
  border-bottom: 1px solid #5b8ac8;
  box-shadow: inset 0 1px #fff, inset 0 2px #4f80c0, inset 0 -1px #fff, inset 0 -2px #999;
}
.docktitle h2 { font-size: 11px; }

.wave { flex: 1; display: flex; background: #000; border-top: 1px solid #dfdfdf; min-height: 300px; color: #0f0; font: 10px/20px "DejaVu Sans Mono", monospace; }
.names { width: 77px; padding-top: 31px; overflow: hidden; }
.grouprow { height: 20px; display: flex; align-items: center; padding-left: 10px; font-size: 11px; }
.mark { width: 4px; height: 5px; border: solid #0f0; border-width: 2px 0; margin: 0 6px 0 -10px; }
.names ul { width: 72px; border-bottom: 3px solid #ff0; display: grid; gap: 5px; padding-bottom: 1px; margin-top: 1px; }
.names li { display: flex; justify-content: flex-end; height: 15px; line-height: 15px; background: #0ff; color: #000; }
.names b { width: 15px; height: 15px; background: #20a8a8; border: 1px solid #a55; color: #d01818; font: bold 9px/13px "Liberation Sans Narrow", "Liberation Sans", sans-serif; text-align: center; }
.names li svg { width: 15px; height: 15px; margin: 0 5px; }
.scroller { width: 19px; background: linear-gradient(90deg, #dfdfdf 3px, #858585 3px 4px, #fff 4px 5px, #dfdfdf 5px 13px, #858585 13px 14px, #fff 14px 15px, #e4e4e4 15px); padding-left: 3px; }
.values { width: 63px; padding: 50px 6px 0 0; text-align: right; color: #0ff; font-size: 11px; }
.plot { flex: 1; min-width: 0; border-left: 5px solid #dfdfdf; display: flex; flex-direction: column; }
.ruler { height: 18px; padding-left: 2px; display: flex; background: #808080; border-top: 1px solid #dfdfdf; border-bottom: 1px solid #dfdfdf; color: #ff0; font: 13px/16px "Liberation Sans Narrow", "Liberation Sans", sans-serif; }
.ruler span { flex: 1 0 0; min-width: 0; border-left: 1px solid #ff0; background: linear-gradient(#ff0, #ff0) 50% 100% / 1px 4px no-repeat; }
.ruler span:not(.cut) { flex-grow: 2; }
.ruler span:first-child { border-color: transparent; padding-left: 1px; }
.ruler .cut { background: none; }
.traces { flex: 1; position: relative; padding-top: 34px; }
.trace { display: flex; height: 16px; margin-bottom: 4px; padding-left: 2px; background: #616161; }
.trace i { flex: 1 0 0; border: 0 solid #0f0; }
.trace .hi { border-width: 1px 0 0 1px; }
.trace .lo { border-color: #0ff; border-width: 0 0 1px 1px; }
.trace .x { border: 1px solid #f00; background: url("data:image/svg+xml,%3Csvg xmlns='http://www.w3.org/2000/svg' width='4' height='4' shape-rendering='crispEdges' fill='red'%3E%3Cpath d='M0 0h1v1H0zM1 1h1v1H1zM2 2h1v1H2zM3 3h1v1H3z'/%3E%3C/svg%3E"); }
.trace .x + .lo { border-left: 0; }
.cursor { position: absolute; left: 2px; top: 1px; bottom: 0; width: 1px; background: repeating-linear-gradient(#fff 0 15px, transparent 15px 18px, #fff 18px 21px, transparent 21px 24px); }
```
